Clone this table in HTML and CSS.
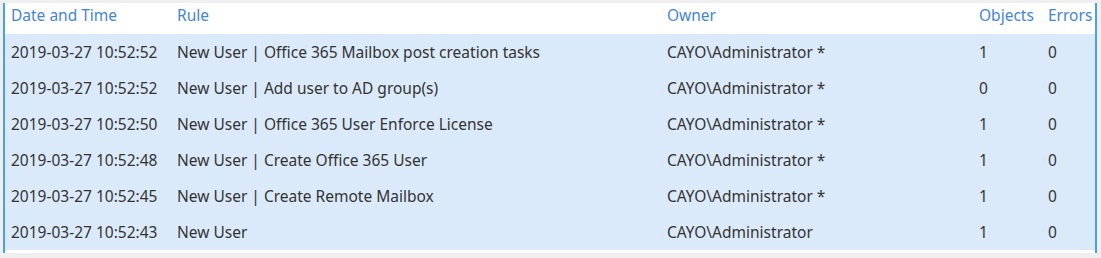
FILE: index.html
```html
<!DOCTYPE html>
<html>
<head>
<meta charset="utf-8">
<link rel="stylesheet" href="styles.css">
</head>
<body>
<div class="list">
  <div class="row head">
    <div>Date and Time</div>
    <div>Rule</div>
    <div>Owner</div>
    <div>Objects</div>
    <div>Errors</div>
  </div>
  <div class="row item">
    <div>2019-03-27 10:52:52</div>
    <div>New User | Office 365 Mailbox post creation tasks</div>
    <div>CAYO\Administrator *</div>
    <div class="num">1</div>
    <div class="num">0</div>
  </div>
  <div class="row item">
    <div>2019-03-27 10:52:52</div>
    <div>New User | Add user to AD group(s)</div>
    <div>CAYO\Administrator *</div>
    <div class="num">0</div>
    <div class="num">0</div>
  </div>
  <div class="row item">
    <div>2019-03-27 10:52:50</div>
    <div>New User | Office 365 User Enforce License</div>
    <div>CAYO\Administrator *</div>
    <div class="num">1</div>
    <div class="num">0</div>
  </div>
  <div class="row item">
    <div>2019-03-27 10:52:48</div>
    <div>New User | Create Office 365 User</div>
    <div>CAYO\Administrator *</div>
    <div class="num">1</div>
    <div class="num">0</div>
  </div>
  <div class="row item">
    <div>2019-03-27 10:52:45</div>
    <div>New User | Create Remote Mailbox</div>
    <div>CAYO\Administrator *</div>
    <div class="num">1</div>
    <div class="num">0</div>
  </div>
  <div class="row item">
    <div>2019-03-27 10:52:43</div>
    <div>New User</div>
    <div>CAYO\Administrator</div>
    <div class="num">1</div>
    <div class="num">0</div>
  </div>
</div>
</body>
</html>
```
FILE: styles.css
```css
html, body {
  margin: 0;
  padding: 0;
  background: #efefef;
  font-family: "Noto Sans", "Open Sans", sans-serif;
  font-size: 15.5px;
}
body {
  padding: 3px 4px 5px 3px;
  height: 258px;
  box-sizing: border-box;
}
.list {
  background: #ffffff;
  border-left: 2px solid #49a1df;
  border-right: 2px solid #49a1df;
  height: 250px;
  box-sizing: border-box;
}
.row {
  display: grid;
  grid-template-columns: 166px 490px 312px 69px 1fr;
  padding-left: 6px;
  white-space: nowrap;
}
.head {
  height: 31px;
  padding-top: 1px;
  line-height: 22px;
  box-sizing: border-box;
  color: #4585cf;
}
.item {
  height: 36px;
  line-height: 36px;
  background: #dbeafa;
  color: #333333;
}
.num {
  padding-left: 0;
}
```
